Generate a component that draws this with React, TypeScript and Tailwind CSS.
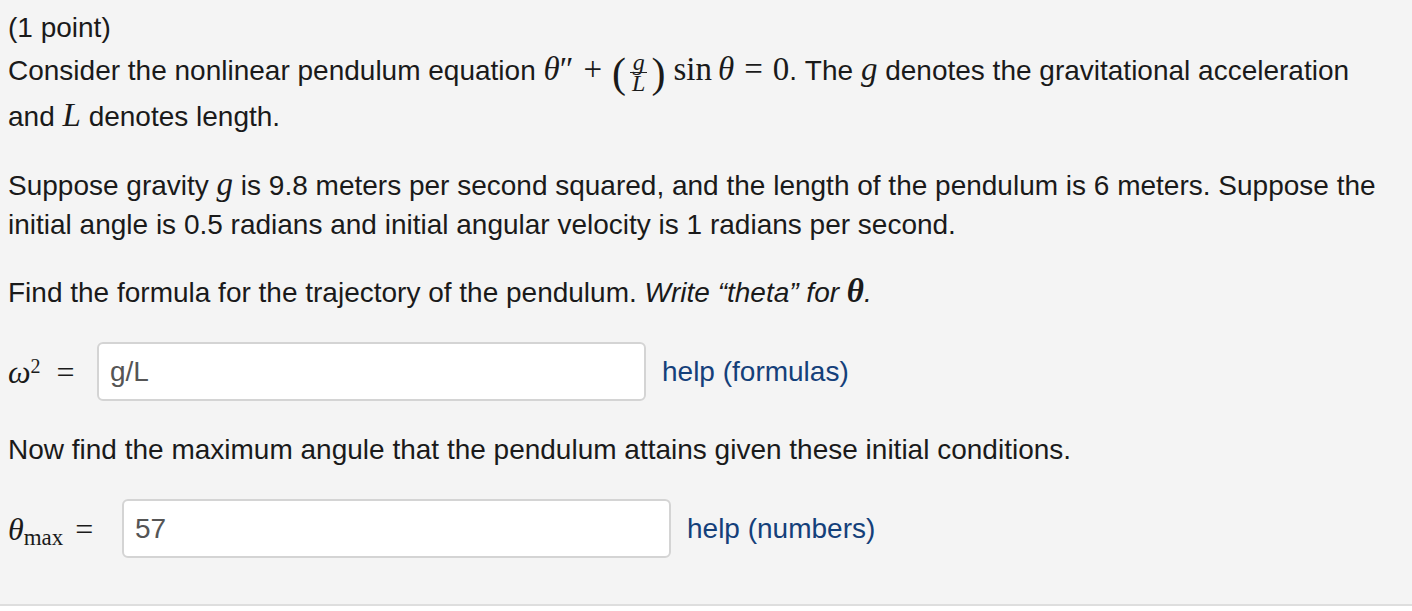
import React from 'react'

const serif = { fontFamily: '"Liberation Serif", "DejaVu Serif", serif' }

function M({ children, italic = true, className = '' }: { children: React.ReactNode; italic?: boolean; className?: string }) {
  return (
    <span className={`${italic ? 'italic' : ''} text-[33px] leading-none ${className}`} style={serif}>
      {children}
    </span>
  )
}

function Frac() {
  return (
    <span className="inline-flex items-center align-middle" style={serif}>
      <span className="text-[42px] leading-none">(</span>
      <span className="mx-[4px] inline-flex flex-col items-center text-[24px] italic leading-[20px]">
        <span className="px-[2px]">g</span>
        <span className="w-full border-t border-[#222]" />
        <span className="px-[2px]">L</span>
      </span>
      <span className="text-[42px] leading-none">)</span>
    </span>
  )
}

function AnswerRow({
  label,
  value,
  help,
  labelWidth,
}: {
  label: React.ReactNode
  value: string
  help: string
  labelWidth: string
}) {
  return (
    <div className="flex items-center">
      <div className={`flex ${labelWidth} items-center`}>{label}</div>
      <div className="ml-[12px] flex h-[59px] w-[549px] items-center rounded-[6px] border-2 border-[#d4d4d4] bg-white pl-[11px] text-[28px] text-[#555]">
        {value}
      </div>
      <a className="ml-[16px] text-[28px] text-[#14407a]">{help}</a>
    </div>
  )
}

export default function App() {
  return (
    <div className="h-[611px] w-[1412px] bg-white" style={{ fontFamily: '"Liberation Sans", Arial, sans-serif' }}>
      <div className="h-[606px] border-b-2 border-[#dedede] bg-[#f4f4f4] px-[8px] pt-[11px] text-[28px] text-[#1a1a1a]">
        <div className="leading-[34px]">(1 point)</div>
        <div className="mt-[3px] leading-[46px]">
          Consider the nonlinear pendulum equation{' '}
          <M>
            θ<span className="not-italic">″</span>
          </M>
          <M italic={false} className="mx-[10px]">+</M>
          <Frac />
          <M italic={false} className="ml-[8px]">sin</M>
          <M className="ml-[6px]">θ</M>
          <M italic={false} className="mx-[10px]">=</M>
          <M italic={false}>0</M>. The <M>g</M> denotes the gravitational acceleration
          <br />
          and <M>L</M> denotes length.
        </div>
        <p className="mt-[26px] leading-[39px]">
          Suppose gravity <M>g</M> is 9.8 meters per second squared, and the length of the pendulum is 6 meters. Suppose the initial angle is 0.5 radians and initial angular velocity is 1 radians per second.
        </p>
        <p className="mt-[29px] leading-[39px]">
          Find the formula for the trajectory of the pendulum. <i>Write “theta” for </i>
          <M><b>θ</b></M>
          <i>.</i>
        </p>
        <div className="mt-[30px]">
          <AnswerRow
            labelWidth="w-[77px]"
            label={
              <span style={serif} className="text-[32px]">
                <i>ω</i>
                <sup className="text-[20px]">2</sup>
                <span className="ml-[16px]">=</span>
              </span>
            }
            value="g/L"
            help="help (formulas)"
          />
        </div>
        <p className="mt-[29px] leading-[39px]">Now find the maximum angule that the pendulum attains given these initial conditions.</p>
        <div className="mt-[30px]">
          <AnswerRow
            labelWidth="w-[102px]"
            label={
              <span style={serif} className="text-[32px]">
                <i>θ</i>
                <sub className="text-[23px]">max</sub>
                <span className="ml-[12px]">=</span>
              </span>
            }
            value="57"
            help="help (numbers)"
          />
        </div>
      </div>
    </div>
  )
}
